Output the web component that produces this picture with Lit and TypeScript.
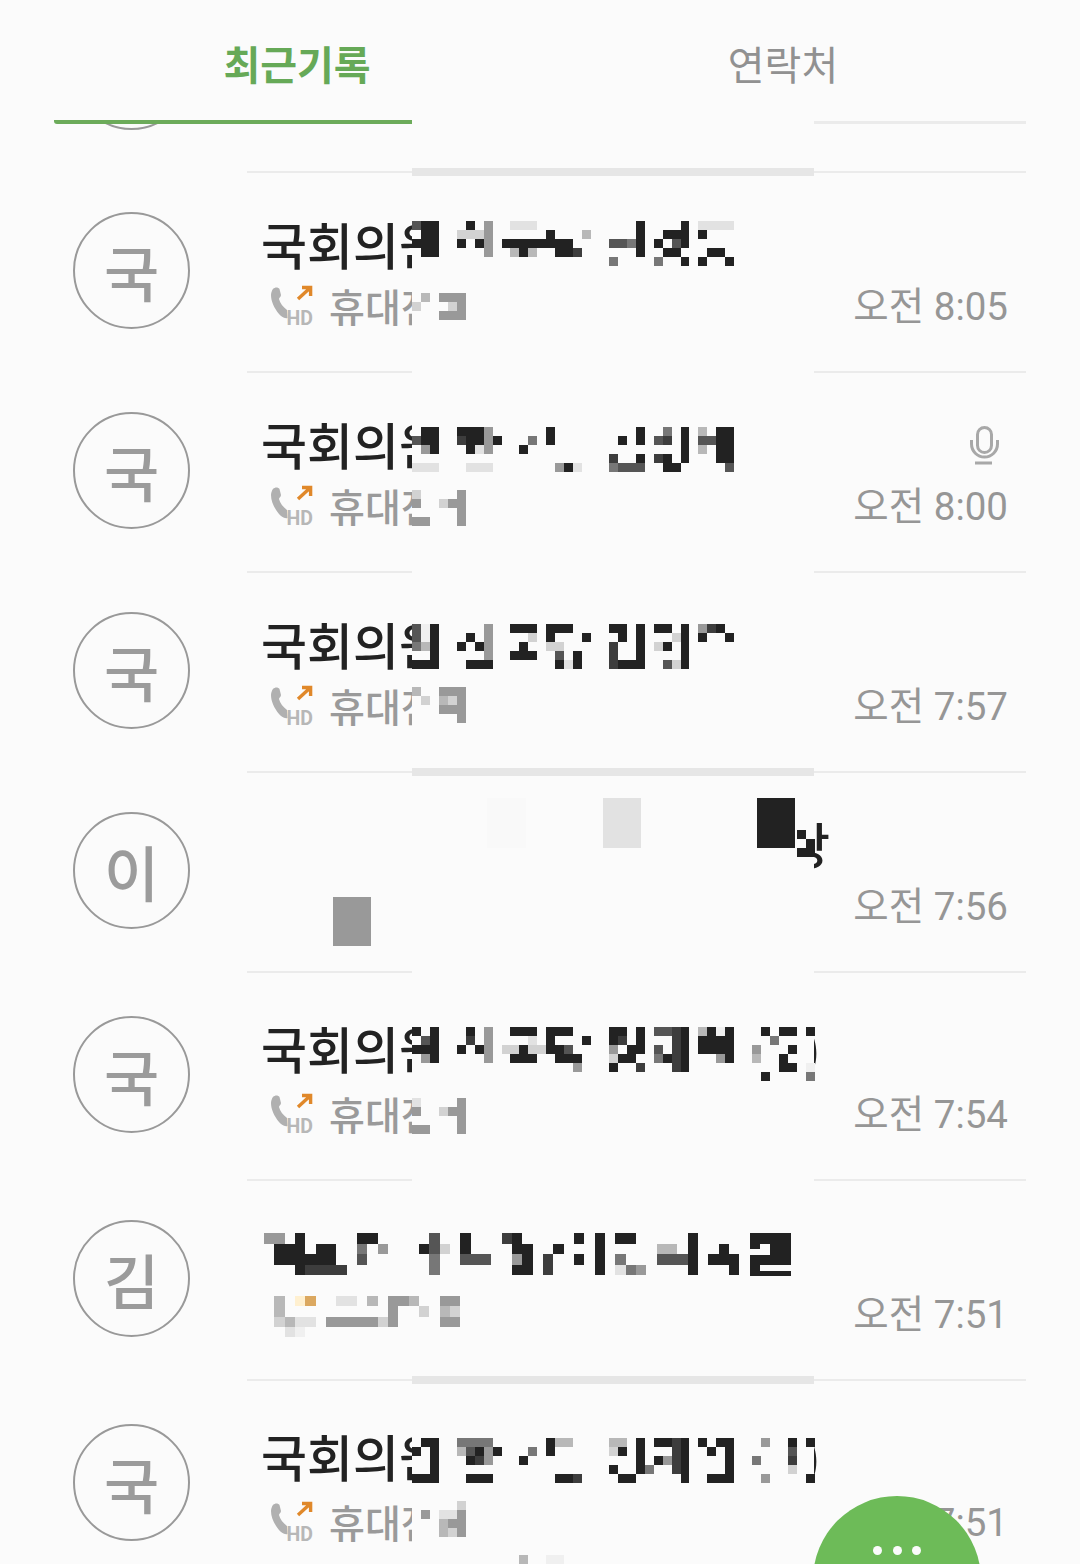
import { LitElement, html, css, svg } from 'lit';
import { customElement } from 'lit/decorators.js';

// colours of the mosaic cells
const SHADES: Record<string, string> = {
  k: '#222222', d: '#3d3d3d', m: '#555555', g: '#777777', h: '#999999',
  l: '#b8b8b8', c: '#d2d2d2', e: '#e2e2e2', f: '#f0f0f0', n: '#f9f9f9',
  o: '#dba860', y: '#fff0d0',
};

interface Patch { x: number; y: number; cw: number; ch: number; rows: string[]; }
interface Row {
  letter: string;
  title?: string;
  tail?: string;
  tailGap?: number;
  hd?: boolean;
  mic?: boolean;
  time: string;
  tall?: boolean;
  band?: boolean;
  patches: Patch[];
}

const big = (x: number, y: number, rows: string[]): Patch => ({ x, y, cw: 8.95, ch: 9, rows });

const ROWS: Row[] = [
  {
    letter: '국', title: '국회의원', hd: true, time: '오전 8:05', band: true,
    patches: [
      big(412, 49, [
        'm0 k1-2 k6 h8 e11-13 k25 k30 e32-35',
        'k1-2 c5-7 h8 k15 l19 k25 k28-30 k32',
        'k0-2 k5 k7 h8 k10-17 m22-23 g24 k25 k27 m29 k30',
        'k1-2 h8 l11 k12 l13 k16-17 d18 k25 k28-29 k33-34',
        'g22 g27 k30 k32 k35',
      ]),
      big(412, 121, ['l1 h3-5', 'c0 c4 h5', 'h3-5']),
    ],
  },
  {
    letter: '국', title: '국회의원', hd: true, mic: true, time: '오전 8:00',
    patches: [
      big(412, 55, [
        'k1-2 k5-7 h8 k15 k25 g28 k30 l32 k34-35',
        'm0 k1-2 d5 k6-7 h8 k9 g13 k15 k23 k25 m27 d28 k30 m32-33 k34-35',
        'h1 k2 k6 e7 h8 k12 k30 l32 k34-35',
        'd22 k25 d27 k28 k30 k34-35',
        'e0-2 e6-8 h16 k17 e18 g22 m23-25 k28-29 m35',
      ]),
      big(412, 118, ['c0 h5', 'h0 c3 h4-5', 'h5', 'h0-1 h5']),
    ],
  },
  {
    letter: '국', title: '국회의원', hd: true, time: '오전 7:57',
    patches: [
      big(412, 52, [
        'm0 f1 k2 h8 k11-13 k15-17 k22-23 k25 k27-28 k30 h32 d33 k34',
        'm0 f1 k2 k6 h8 c13 k15 k19 k23 k25 c29 k30 k32 k35',
        'g0 l1 k2 k5 k7 h8 k12 c15-16 d22 k25 c27 k28 k30',
        'k2 h8 k11-13 m16 k18 d22 k25 k30',
        'k0-2 k6-8 k16 e17 k18 d22 k23-25 m28 c29 k30',
      ]),
      big(412, 115, ['l0 h3-5', 'c1 l3 c4 h5', 'h3-5', 'h5']),
    ],
  },
  {
    letter: '이', tail: '상', tailGap: 523, time: '오전 7:56', band: true,
    patches: [
      { x: 487, y: 26, cw: 38.5, ch: 50, rows: ['n0 e3 k7'] },
      { x: 333, y: 125, cw: 38, ch: 49, rows: ['h0'] },
      { x: 797, y: 58, cw: 9, ch: 9, rows: ['k0', 'k1', 'k0-1'] },
    ],
  },
  {
    letter: '국', title: '국회의원', tail: ')', tailGap: 358, hd: true, time: '오전 7:54', tall: true,
    patches: [
      big(412, 55, [
        'k0 k2 k6 h8 k11-13 k15-17 k22-23 k25 m27-28 d29 k30 l32 k33 f34 k35 k39 k41-42 k44',
        'm1 k2 d6 h8 e13 k15 k19 k22 d23 k25 d29 k30 k32-35 g40',
        'k0-2 k5 k7 h8 c10-11 k12 c13-14 k15-16 m17 h22 k24-25 m27 d29 k30 k32-35 h38 k42',
        'h1 k2 h8 k11-13 k16-18 c22 k23-24 g27 k28 d29 k30 h34 k35 l38 k41',
        'h18 k22 d25 d29 k30 k41-42 f44',
        'k39 g44',
      ]),
      big(412, 126, ['e0 h5', 'h0 c3 h4-5', 'h5', 'h0-1 h5']),
    ],
  },
  {
    letter: '김', time: '오전 7:51',
    patches: [
      {
        x: 264, y: 53, cw: 10.33, ch: 10.6,
        rows: [
          'h0-1 k3 k9-10 m16 k19 d23 k24 k30 k32 k34-35 k41 k47-50',
          'k1-3 k5-6 g9 h11 k15 m16 c17 k19 k24-25 k28 k32 l38-39 k41 k44',
          'k1-6 m9 g16 m19-21 h24 k25 d27 k30 k32 g34 m38-40 k41 k43-45',
          'k3 d4-7 g16 k24-25 d27 k32 e34 g35 h36 k41 k45',
        ],
      },
      // the last letter of this line is finer than the rest of the mosaic
      {
        x: 264, y: 63.6, cw: 10.33, ch: 5.3,
        rows: ['k47 k49-50', 'k49-50', 'k47-50', 'k47-50', 'k47', 'k47-50'],
      },
      {
        x: 264, y: 116, cw: 10.33, ch: 10.3,
        rows: [
          'l1 y3 o4 e7-8 l10 h12-13 l14 h17-18',
          'l1 h12 c15 l17 c18',
          'c1 l2 e3-4 h6-10 c11 h12 h17-18',
          'e2 f3',
        ],
      },
    ],
  },
  {
    letter: '국', title: '국회의원', tail: ')', tailGap: 358, hd: true, time: '오전 7:51', tall: true, band: true,
    patches: [
      big(412, 58, [
        'k1-2 g5-8 k15 l16-17 l22-23 k25 k27-28 d29 k30 k32 k34-35 h39 k42 k44',
        'k0 k2 l5 m6 k7 h8 k9 g13 k15 c22 k23 k25 d29 k30 k33 k35 m42',
        'k2 k6 d7 h8 k12 k25 k27 h28 d29 k30 k35 g38 d42',
        'k2 k22 k25 g26 d29 k30 k35 c42',
        'k0-2 k6-8 k16-17 d18 k23-24 k30 k33-35 h39 k44',
      ]),
      big(412, 121, ['c5', 'h1 e3-4 h5', 'l3 h4-5', 'l3 c4 h5']),
      big(412, 175, ['l12 f15-16']),
    ],
  },
];

// "k1-3 h8" means shade k in columns 1 to 3, shade h in column 8
function patchRects(p: Patch) {
  const rects: ReturnType<typeof svg>[] = [];
  p.rows.forEach((row, r) => {
    for (const m of row.matchAll(/([a-z])(\d+)(?:-(\d+))?/g)) {
      const from = Number(m[2]);
      const to = m[3] ? Number(m[3]) : from;
      rects.push(svg`<rect x=${from * p.cw} y=${r * p.ch} width=${(to - from + 1) * p.cw} height=${p.ch} fill=${SHADES[m[1]]}></rect>`);
    }
  });
  return rects;
}

const HD_ICON = html`<svg class="hd" width="44" height="50" viewBox="0 0 44 50">
  <path fill="#b0b0b0" d="M2 5C4 3 7 3 8.5 5L10 11C10 13 8 13.5 8 15C9 19 12 23 16 26L16.5 34C13 35 10 32 8 30C3 24 0 17 0 11C0 9 1 6 2 5Z"></path>
  <path fill="none" stroke="#e0882a" stroke-width="3.4" d="M27 15L39 4M31 3.5H39.6V12"></path>
  <text x="15.5" y="41" font-family="Roboto, sans-serif" font-weight="700" font-size="19.5" fill="#b7b7b7">HD</text>
</svg>`;

const MIC_ICON = html`<svg class="mic" width="32" height="40" viewBox="0 0 32 40" fill="none" stroke="#a8a8a8" stroke-width="3">
  <rect x="9.5" y="2.5" width="14" height="25" rx="7"></rect>
  <path d="M3.5 15v4a13 13 0 0 0 26 0v-4M7 38H24"></path>
</svg>`;

@customElement('app-root')
export class AppRoot extends LitElement {
  static styles = css`
    :host {
      display: block;
      position: relative;
      width: 1080px;
      height: 1564px;
      overflow: hidden;
      background: #fbfbfb;
      font-family: "Noto Sans CJK KR", "Noto Sans", sans-serif;
    }

    .tabs {
      position: relative;
      display: flex;
      height: 124px;
      padding: 0 54px;
      z-index: 2;
      background: #fbfbfb;
    }
    .tab {
      flex: 1;
      display: flex;
      justify-content: center;
      box-sizing: border-box;
      padding-top: 35px;
      font-size: 40px;
      line-height: 56px;
      color: #919191;
      border-bottom: 3px solid #ebebeb;
    }
    .tab.active {
      color: #66a957;
      font-weight: 700;
      border-bottom: 4px solid #6cab5a;
      border-radius: 0 0 0 3px;
    }
    .tabs .strip {
      position: absolute;
      left: 412px;
      width: 402px;
      top: 110px;
      height: 14px;
      background: #fbfbfb;
    }

    .peek {
      height: 48px;
      overflow: hidden;
    }
    .peek .avatar {
      margin: -111px 0 0 73px;
    }

    .row {
      position: relative;
      display: flex;
      align-items: flex-start;
      height: 200px;
    }
    .row.tall {
      height: 208px;
    }
    .row::before {
      content: "";
      position: absolute;
      left: 247px;
      width: 779px;
      top: -1px;
      height: 2px;
      background: #ebebeb;
    }
    .mask {
      position: absolute;
      left: 412px;
      width: 402px;
      top: -1px;
      bottom: -1px;
      background: #fbfbfb;
    }
    .band {
      position: absolute;
      left: 412px;
      width: 402px;
      top: -4px;
      height: 8px;
      background: #e6e6e6;
    }
    .patch {
      position: absolute;
      overflow: visible;
      shape-rendering: crispEdges;
    }

    .avatar {
      flex: none;
      box-sizing: border-box;
      width: 117px;
      height: 117px;
      margin: 40px 0 0 73px;
      display: flex;
      align-items: center;
      justify-content: center;
      border: 2px solid #999;
      border-radius: 50%;
      font-size: 60px;
      font-weight: 500;
      color: #9b9b9b;
    }
    .tall .avatar {
      margin-top: 44px;
    }

    .body {
      flex: 1;
      box-sizing: border-box;
      margin: 0 72px 0 71px;
      padding-top: 41px;
    }
    .tall .body {
      padding-top: 45px;
    }
    .title {
      display: flex;
      align-items: center;
      justify-content: space-between;
      height: 60px;
      font-size: 50px;
      font-weight: 500;
      line-height: 60px;
      color: #222;
      white-space: nowrap;
    }
    .mic {
      margin: 4px 8px 0 0;
    }
    .sub {
      display: flex;
      align-items: center;
      height: 60px;
      margin-top: 3px;
      font-size: 39px;
      line-height: 60px;
      color: #9a9a9a;
      white-space: nowrap;
    }
    .tall .sub {
      margin-top: 7px;
    }
    .label {
      margin-bottom: 3px;
      font-weight: 500;
    }
    .hd {
      flex: none;
      margin: 6px 14px 0 10px;
    }
    .time {
      margin: 2px 0 0 auto;
      font-family: Roboto, "Noto Sans CJK KR", sans-serif;
      font-size: 38.5px;
      color: #969696;
    }

    .fab {
      position: absolute;
      left: 813px;
      top: 1496px;
      width: 168px;
      height: 168px;
      box-sizing: border-box;
      padding-top: 50px;
      display: flex;
      justify-content: center;
      gap: 10.5px;
      border-radius: 50%;
      background: #6dbb58;
      z-index: 3;
    }
    .fab i {
      width: 9px;
      height: 9px;
      border-radius: 50%;
      background: #fbfbfb;
    }
  `;

  renderRow(row: Row) {
    return html`
      <div class="row ${row.tall ? 'tall' : ''}">
        <div class="avatar">${row.letter}</div>
        <div class="body">
          <div class="title">
            <span>${row.title ?? ''}${row.tail
              ? html`<span style="margin-left:${row.tailGap}px">${row.tail}</span>`
              : ''}</span>
            ${row.mic ? MIC_ICON : ''}
          </div>
          <div class="sub">
            ${row.hd ? html`${HD_ICON}<span class="label">휴대전화</span>` : ''}
            <span class="time">${row.time}</span>
          </div>
        </div>
        <div class="mask"></div>
        ${row.band ? html`<div class="band"></div>` : ''}
        ${row.patches.map(p => html`
          <svg class="patch" style="left:${p.x}px;top:${p.y}px" width="10" height="10">${patchRects(p)}</svg>
        `)}
      </div>
    `;
  }

  render() {
    return html`
      <div class="tabs">
        <div class="tab active">최근기록</div>
        <div class="tab">연락처</div>
        <div class="strip"></div>
      </div>
      <div class="peek"><div class="avatar"></div></div>
      ${ROWS.map(r => this.renderRow(r))}
      <div class="fab"><i></i><i></i><i></i></div>
    `;
  }
}
